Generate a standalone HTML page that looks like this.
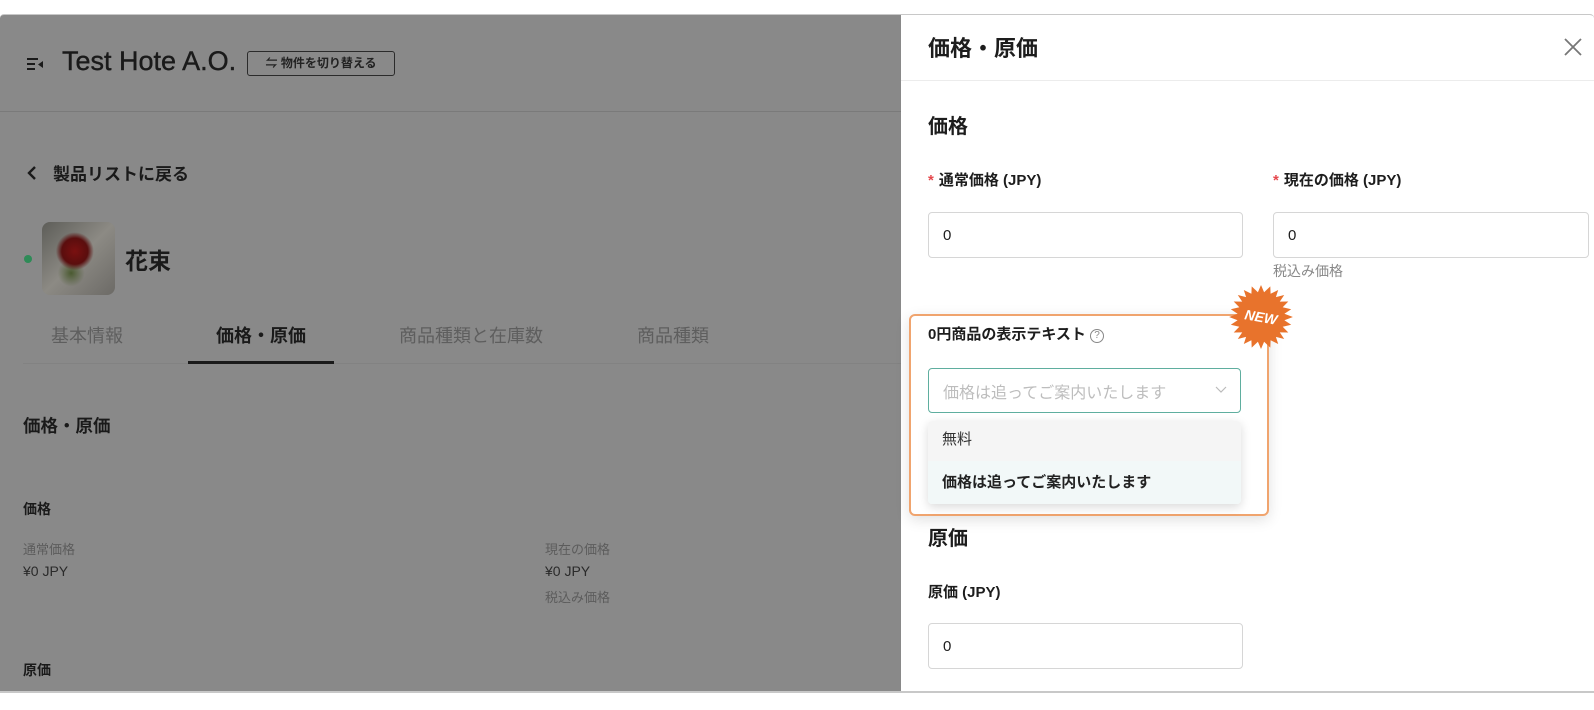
<!DOCTYPE html>
<html><head><meta charset="utf-8">
<style>
*{margin:0;padding:0;box-sizing:border-box}
body{width:1594px;height:710px;background:#fff;position:relative;overflow:hidden;font-family:"Liberation Sans","Noto Sans CJK JP",sans-serif;color:#1d1d1d}
.a{position:absolute;white-space:nowrap}
.frame{position:absolute;left:0;top:14px;width:1594px;height:679px;background:#898989;border-top:1px solid #c8c8c8;border-bottom:2px solid #c8c8c8;overflow:hidden;border-radius:4px 4px 0 0}
.panel{position:absolute;left:901px;top:0;width:693px;height:679px;background:#fff}
.inp{position:absolute;border:1px solid #d6d6d6;border-radius:4px;background:#fff;font-size:15px;padding-left:14px;display:flex;align-items:center}
.lbl{font-size:15px;font-weight:bold}
.ast{color:#e5484d;font-weight:bold;margin-right:5px}
</style></head><body>
<div class="frame">
  <svg class="a" style="left:26px;top:42px" width="20" height="14" viewBox="0 0 20 14"><rect x="1" y="1" width="11" height="2" fill="#1a1a1a"/><rect x="1" y="6" width="8" height="2" fill="#1a1a1a"/><rect x="1" y="11" width="8" height="2" fill="#1a1a1a"/><path d="M17 4 L12 7.5 L17 11 Z" fill="#1a1a1a"/></svg>
  <div class="a" style="left:62px;top:31px;font-size:27px;color:#1a1a1a;-webkit-text-stroke:0.4px #1a1a1a">Test Hote A.O.</div>
  <div class="a" style="left:247px;top:36px;width:148px;height:25px;border:1px solid #2b2b2b;border-radius:3px;font-size:12px;font-weight:bold;color:#222;text-align:center;line-height:23px">⇋ 物件を切り替える</div>
  <div class="a" style="left:0;top:96px;width:901px;height:1px;background:#7a7a7a"></div>
  <svg class="a" style="left:27px;top:151px" width="10" height="14" viewBox="0 0 10 14"><path d="M8 1L2 7L8 13" fill="none" stroke="#1a1a1a" stroke-width="2.4"/></svg>
  <div class="a" style="left:53px;top:145px;font-size:17px;font-weight:bold;color:#1a1a1a">製品リストに戻る</div>
  <div class="a" style="left:24px;top:240px;width:8px;height:8px;border-radius:50%;background:#2e8b57"></div>
  <div class="a" style="left:42px;top:207px;width:73px;height:73px;border-radius:8px;background:radial-gradient(circle at 45% 40%,#7a1010 0,#5a0e0e 22%,transparent 32%),radial-gradient(circle at 40% 70%,#4a5a30 0,transparent 20%),linear-gradient(135deg,#5d5d58,#8c8a84 50%,#6c6a66)"></div>
  <div class="a" style="left:125px;top:227px;font-size:23px;font-weight:bold;color:#1a1a1a">花束</div>
  <div class="a" style="left:51px;top:307px;font-size:18px;color:#5e5e5e">基本情報</div>
  <div class="a" style="left:216px;top:307px;font-size:18px;font-weight:bold;color:#1a1a1a">価格・原価</div>
  <div class="a" style="left:399px;top:307px;font-size:18px;color:#5e5e5e">商品種類と在庫数</div>
  <div class="a" style="left:637px;top:307px;font-size:18px;color:#5e5e5e">商品種類</div>
  <div class="a" style="left:23px;top:348px;width:878px;height:1px;background:#828282"></div>
  <div class="a" style="left:188px;top:346px;width:146px;height:3px;background:#1a1a1a"></div>
  <div class="a" style="left:23px;top:398px;font-size:17.5px;font-weight:bold;color:#1a1a1a">価格・原価</div>
  <div class="a" style="left:23px;top:484px;font-size:14px;font-weight:bold;color:#1a1a1a">価格</div>
  <div class="a" style="left:23px;top:524px;font-size:13px;color:#5c5c5c">通常価格</div>
  <div class="a" style="left:23px;top:548px;font-size:14px;color:#2a2a2a">¥0 JPY</div>
  <div class="a" style="left:545px;top:524px;font-size:13px;color:#5c5c5c">現在の価格</div>
  <div class="a" style="left:545px;top:548px;font-size:14px;color:#2a2a2a">¥0 JPY</div>
  <div class="a" style="left:545px;top:572px;font-size:13px;color:#5c5c5c">税込み価格</div>
  <div class="a" style="left:23px;top:645px;font-size:14px;font-weight:bold;color:#1a1a1a">原価</div>

  <div class="panel">
    <div class="a" style="left:27px;top:16px;font-size:22px;font-weight:bold">価格・原価</div>
    <svg class="a" style="left:662px;top:22px" width="20" height="20" viewBox="0 0 20 20"><path d="M2 2L18 18M18 2L2 18" stroke="#777" stroke-width="1.8"/></svg>
    <div class="a" style="left:0;top:65px;width:693px;height:1px;background:#ececec"></div>
    <div class="a" style="left:27px;top:95px;font-size:20px;font-weight:bold">価格</div>
    <div class="a lbl" style="left:27px;top:154px"><span class="ast">*</span>通常価格 (JPY)</div>
    <div class="a lbl" style="left:372px;top:154px"><span class="ast">*</span>現在の価格 (JPY)</div>
    <div class="inp" style="left:27px;top:197px;width:315px;height:46px">0</div>
    <div class="inp" style="left:372px;top:197px;width:316px;height:46px">0</div>
    <div class="a" style="left:372px;top:246px;font-size:14px;color:#888">税込み価格</div>

    <div class="a" style="left:8px;top:299px;width:360px;height:202px;border:2px solid #f0a46e;border-radius:6px;box-shadow:0 4px 14px rgba(0,0,0,0.12)"></div>
    <div class="a lbl" style="left:27px;top:308px">0円商品の表示テキスト <span style="display:inline-block;width:14px;height:14px;border:1px solid #888;border-radius:50%;font-size:10px;line-height:12px;text-align:center;color:#888;font-weight:normal;vertical-align:1px">?</span></div>
    <div class="inp" style="left:27px;top:353px;width:313px;height:45px;border-color:#5fae9f;color:#bdbdbd;font-size:16px">価格は追ってご案内いたします</div>
    <svg class="a" style="left:314px;top:371px" width="12" height="8" viewBox="0 0 12 8"><path d="M1 1L6 6L11 1" fill="none" stroke="#bbb" stroke-width="1.2"/></svg>
    <div class="a" style="left:27px;top:406px;width:313px;height:83px;background:#fff;border-radius:4px;box-shadow:0 3px 10px rgba(0,0,0,0.15);overflow:hidden">
      <div style="height:40px;padding-left:14px;line-height:38px;font-size:15px;color:#333;background:#f5f5f5">無料</div>
      <div style="height:43px;padding-left:14px;line-height:43px;font-size:15px;font-weight:bold;color:#222;background:#f2f8f8">価格は追ってご案内いたします</div>
    </div>
    <svg class="a" style="left:327px;top:269px" width="66" height="66" viewBox="-33 -33 66 66">
      <polygon fill="#e8732c" points="0,-32 3.1,-24.8 9.3,-30.6 9.6,-23.2 17.2,-27 14.9,-19.9 23.2,-22 18.8,-15.4 27.3,-15.5 21.7,-9.7 30.2,-7.8 23.4,-3.3 31.9,0 23.4,3.3 30.2,7.8 21.7,9.7 27.3,15.5 18.8,15.4 23.2,22 14.9,19.9 17.2,27 9.6,23.2 9.3,30.6 3.1,24.8 0,32 -3.1,24.8 -9.3,30.6 -9.6,23.2 -17.2,27 -14.9,19.9 -23.2,22 -18.8,15.4 -27.3,15.5 -21.7,9.7 -30.2,7.8 -23.4,3.3 -31.9,0 -23.4,-3.3 -30.2,-7.8 -21.7,-9.7 -27.3,-15.5 -18.8,-15.4 -23.2,-22 -14.9,-19.9 -17.2,-27 -9.6,-23.2 -9.3,-30.6 -3.1,-24.8"/>
      <text x="0" y="5" transform="rotate(10)" text-anchor="middle" fill="#fff" font-family="Liberation Sans" font-weight="bold" font-style="italic" font-size="14">NEW</text>
    </svg>

    <div class="a" style="left:27px;top:507px;font-size:20px;font-weight:bold">原価</div>
    <div class="a lbl" style="left:27px;top:566px">原価 (JPY)</div>
    <div class="inp" style="left:27px;top:608px;width:315px;height:46px">0</div>
  </div>
</div>
</body></html>
